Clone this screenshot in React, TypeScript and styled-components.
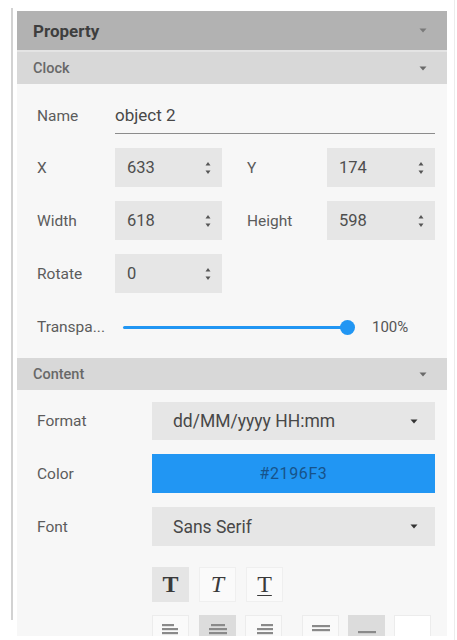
import React from "react";
import styled, { createGlobalStyle } from "styled-components";

const Global = createGlobalStyle`
  html, body { margin: 0; padding: 0; background: #ffffff; }
  body { font-family: Roboto, "Noto Sans", "Liberation Sans", sans-serif; }
  * { box-sizing: border-box; }
`;

const Page = styled.div`
  width: 457px;
  height: 640px;
  display: flex;
  align-items: flex-start;
  overflow: hidden;
`;

const LeftRail = styled.div`
  width: 2px;
  height: 612px;
  margin: 8px 4px 0 11px;
  background: #d2d2d2;
`;

const RightRail = styled.div`
  width: 1px;
  height: 640px;
  margin-left: 7px;
  background: #ececec;
`;

const Panel = styled.div`
  width: 430px;
  height: 625px;
  margin-top: 11px;
  background: #f7f7f7;
  overflow: hidden;
  display: flex;
  flex-direction: column;
`;

const Header = styled.div<{ $main?: boolean }>`
  height: ${(p) => (p.$main ? "41px" : "32px")};
  flex: none;
  display: flex;
  align-items: center;
  justify-content: space-between;
  padding: 0 20px 0 16px;
  background: ${(p) => (p.$main ? "#b2b2b2" : "#d8d8d8")};
  border-bottom: ${(p) => (p.$main ? "2px solid #e4e4e4" : "none")};
  color: ${(p) => (p.$main ? "#3e3e3e" : "#686868")};
  font-size: ${(p) => (p.$main ? "17px" : "14.5px")};
  font-weight: ${(p) => (p.$main ? 700 : 500)};
`;

const Section = styled.div<{ $top: number; $bottom: number; $gap: number }>`
  display: flex;
  flex-direction: column;
  gap: ${(p) => p.$gap}px;
  padding: ${(p) => p.$top}px 12px ${(p) => p.$bottom}px 20px;
  flex: none;
`;

const Row = styled.div<{ $label: number; $h: number }>`
  display: grid;
  grid-template-columns: ${(p) => p.$label}px 1fr;
  align-items: center;
  height: ${(p) => p.$h}px;
`;

const PairRow = styled.div`
  display: grid;
  grid-template-columns: 78px 107px 25px 80px 108px;
  align-items: center;
  height: 39px;
`;

const Label = styled.span`
  font-size: 15.5px;
  color: #5c5c5c;
  white-space: nowrap;
`;

const NameInput = styled.div`
  height: 36px;
  display: flex;
  align-items: center;
  border-bottom: 1px solid #8c8c8c;
  font-size: 17px;
  color: #484848;
  padding-bottom: 2px;
`;

const Spin = styled.div`
  height: 39px;
  background: #e6e6e6;
  display: flex;
  align-items: center;
  justify-content: space-between;
  padding: 0 10px 0 12px;
  font-size: 16.5px;
  color: #4e4e4e;
`;

const SpinArrows = () => (
  <svg width="8" height="14" viewBox="0 0 8 14">
    <path d="M4 1 L6.5 4.5 H1.5 Z" fill="#555" />
    <path d="M4 13 L6.5 9.5 H1.5 Z" fill="#555" />
  </svg>
);

const SliderRow = styled.div`
  display: grid;
  grid-template-columns: 86px 225px 1fr;
  align-items: center;
  height: 40px;
`;

const Track = styled.div`
  position: relative;
  height: 3px;
  background: #2196f3;
  border-radius: 2px;
`;

const Thumb = styled.div`
  position: absolute;
  right: -7px;
  top: -6px;
  width: 15px;
  height: 15px;
  border-radius: 50%;
  background: #2196f3;
`;

const Percent = styled.span`
  font-size: 15px;
  color: #555;
  padding-left: 24px;
`;

const Select = styled.div<{ $h: number }>`
  height: ${(p) => p.$h}px;
  background: #e6e6e6;
  display: flex;
  align-items: center;
  justify-content: space-between;
  padding: 0 17px 0 21px;
  font-size: 17.5px;
  color: #484848;
`;

const ColorSwatch = styled.div`
  height: 39px;
  background: #2196f3;
  display: flex;
  align-items: center;
  justify-content: center;
  font-size: 16px;
  letter-spacing: 0.6px;
  color: #17538a;
`;

const Caret = ({ color = "#333", w = 8 }: { color?: string; w?: number }) => (
  <svg width={w} height={w / 2 + 1} viewBox="0 0 8 5">
    <path d="M0.5 0.5 H7.5 L4 4.5 Z" fill={color} />
  </svg>
);

const ButtonRow = styled.div`
  display: flex;
  padding-left: 135px;
  gap: 10px;
  height: 35px;
  flex: none;
`;

const StyleBtn = styled.div<{ $active?: boolean; $italic?: boolean; $under?: boolean; $bold?: boolean }>`
  width: 37px;
  height: 35px;
  display: flex;
  align-items: center;
  justify-content: center;
  background: ${(p) => (p.$active ? "#e5e5e5" : "#fafafa")};
  border: 1px solid ${(p) => (p.$active ? "#e5e5e5" : "#efefef")};
  font-family: "Liberation Serif", "DejaVu Serif", serif;
  font-size: 24px;
  color: #3a3a3a;
  font-weight: ${(p) => (p.$bold ? 700 : 400)};
  font-style: ${(p) => (p.$italic ? "italic" : "normal")};
  text-decoration: ${(p) => (p.$under ? "underline" : "none")};
  text-underline-offset: 3px;
  text-decoration-thickness: 1px;
`;

const AlignRow = styled.div`
  display: flex;
  padding-left: 135px;
  margin-top: 13px;
  height: 35px;
  flex: none;
`;

const AlignBtn = styled.div<{ $active?: boolean; $plain?: boolean; $gapLeft?: number }>`
  width: 37px;
  height: 35px;
  margin-left: ${(p) => p.$gapLeft ?? 0}px;
  display: flex;
  justify-content: center;
  padding-top: 6px;
  background: ${(p) => (p.$active ? "#dcdcdc" : p.$plain ? "#ffffff" : "#fafafa")};
  border: 1px solid ${(p) => (p.$active ? "#dcdcdc" : "#ececec")};
`;

const lineSets: Record<string, [number, number, number][]> = {
  left: [[0, 2, 12], [0, 6, 16], [0, 10, 16]],
  center: [[2, 2, 14], [0, 6, 18], [0, 10, 18]],
  right: [[6, 2, 12], [2, 6, 16], [2, 10, 16]],
  justify: [[0, 3, 18], [0, 7, 18]],
  bottom: [[0, 9, 18]],
};

const Lines = ({ kind }: { kind: string }) => (
  <svg width="20" height="16" viewBox="0 0 20 16">
    {lineSets[kind].map(([x, y, w], i) => (
      <rect key={i} x={x + 1} y={y} width={w} height="2.2" fill="#8a8a8a" />
    ))}
  </svg>
);

export default function App() {
  return (
    <Page>
      <Global />
      <LeftRail />
      <Panel>
        <Header $main>
          <span>Property</span>
          <Caret color="#7a7a7a" w={8} />
        </Header>
        <Header>
          <span>Clock</span>
          <Caret color="#6a6a6a" w={8} />
        </Header>
        <Section $top={14} $bottom={11} $gap={14}>
          <Row $label={78} $h={36}>
            <Label>Name</Label>
            <NameInput>object 2</NameInput>
          </Row>
          <PairRow>
            <Label>X</Label>
            <Spin>633<SpinArrows /></Spin>
            <span />
            <Label>Y</Label>
            <Spin>174<SpinArrows /></Spin>
          </PairRow>
          <PairRow>
            <Label>Width</Label>
            <Spin>618<SpinArrows /></Spin>
            <span />
            <Label>Height</Label>
            <Spin>598<SpinArrows /></Spin>
          </PairRow>
          <PairRow>
            <Label>Rotate</Label>
            <Spin>0<SpinArrows /></Spin>
          </PairRow>
          <SliderRow>
            <Label>Transpa...</Label>
            <Track>
              <Thumb />
            </Track>
            <Percent>100%</Percent>
          </SliderRow>
        </Section>
        <Header>
          <span>Content</span>
          <Caret color="#6a6a6a" w={8} />
        </Header>
        <Section $top={12} $bottom={21} $gap={14}>
          <Row $label={115} $h={38}>
            <Label>Format</Label>
            <Select $h={38}>
              dd/MM/yyyy HH:mm
              <Caret />
            </Select>
          </Row>
          <Row $label={115} $h={39}>
            <Label>Color</Label>
            <ColorSwatch>#2196F3</ColorSwatch>
          </Row>
          <Row $label={115} $h={39}>
            <Label>Font</Label>
            <Select $h={39}>
              Sans Serif
              <Caret />
            </Select>
          </Row>
        </Section>
        <ButtonRow>
          <StyleBtn $active $bold>T</StyleBtn>
          <StyleBtn $italic>T</StyleBtn>
          <StyleBtn $under>T</StyleBtn>
        </ButtonRow>
        <AlignRow>
          <AlignBtn><Lines kind="left" /></AlignBtn>
          <AlignBtn $active $gapLeft={10}><Lines kind="center" /></AlignBtn>
          <AlignBtn $gapLeft={9}><Lines kind="right" /></AlignBtn>
          <AlignBtn $gapLeft={20}><Lines kind="justify" /></AlignBtn>
          <AlignBtn $active $gapLeft={9}><Lines kind="bottom" /></AlignBtn>
          <AlignBtn $plain $gapLeft={9} />
        </AlignRow>
      </Panel>
      <RightRail />
    </Page>
  );
}
